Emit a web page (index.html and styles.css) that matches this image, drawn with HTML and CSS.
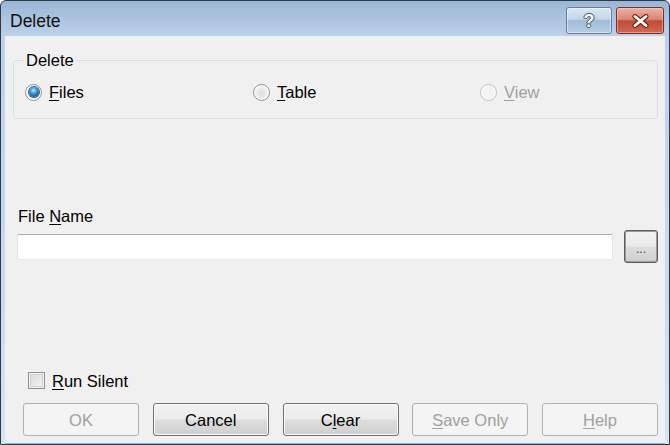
FILE: index.html
```html
<!DOCTYPE html>
<html>
<head>
<meta charset="utf-8">
<link rel="stylesheet" href="styles.css">
</head>
<body>
<div class="window">
  <div class="titlebar">
    <span class="title">Delete</span>
    <div class="caption-btns">
      <span class="cap-btn help"><span class="q">?</span></span>
      <span class="cap-btn close">
        <svg width="19" height="14" viewBox="0 0 19 14">
          <path d="M4 2.5 L15 11.5 M15 2.5 L4 11.5" stroke="#6a261b" stroke-width="5" stroke-linecap="round"/>
          <path d="M4 2.5 L15 11.5 M15 2.5 L4 11.5" stroke="#ffffff" stroke-width="2.8" stroke-linecap="round"/>
        </svg>
      </span>
    </div>
  </div>
  <div class="client">
    <fieldset class="group">
      <legend>Delete</legend>
      <div class="radios">
        <div class="opt"><span class="radio checked"><span class="dot"></span></span><span><u>F</u>iles</span></div>
        <div class="opt"><span class="radio"></span><span><u>T</u>able</span></div>
        <div class="opt disabled"><span class="radio"></span><span><u>V</u>iew</span></div>
      </div>
    </fieldset>
    <div class="fn-label">File <u>N</u>ame</div>
    <div class="file-row">
      <div class="input"></div>
      <div class="btn browse"><span class="dots">...</span></div>
    </div>
    <div class="check"><span class="box"></span><span><u>R</u>un Silent</span></div>
    <div class="buttons">
      <div class="btn disabled">OK</div>
      <div class="btn">Cancel</div>
      <div class="btn">C<u>l</u>ear</div>
      <div class="btn disabled"><u>S</u>ave Only</div>
      <div class="btn disabled"><u>H</u>elp</div>
    </div>
  </div>
</div>
</body>
</html>
```
FILE: styles.css
```css
* { box-sizing: border-box; }
html, body { margin: 0; padding: 0; background: #ffffff; }
body {
  font-family: "Liberation Sans", Arial, sans-serif;
  font-size: 16.5px;
  line-height: 18px;
  color: #000;
}
u { text-decoration: underline; text-underline-offset: 2px; }

.window {
  width: 670px;
  height: 445px;
  border: 1px solid #2f3a47;
  border-radius: 6px 6px 0 0;
  background: linear-gradient(#9bb6d5 0px, #bcd2ea 36px, #c9dcef 300px, #d4e4f3 440px);
  display: flex;
  flex-direction: column;
  overflow: hidden;
}
.titlebar {
  height: 35px;
  display: flex;
  justify-content: space-between;
  align-items: flex-start;
  padding: 0 5px 0 9px;
}
.title {
  font-size: 17.5px;
  line-height: 20px;
  margin-top: 10px;
  color: #101010;
}
.caption-btns {
  display: flex;
  gap: 4px;
  margin-top: 6px;
}
.cap-btn {
  height: 27px;
  border-radius: 3px;
  display: flex;
  align-items: center;
  justify-content: center;
}
.help {
  width: 46px;
  border: 1px solid #6a7f98;
  background: linear-gradient(#dae7f4 0%, #c2d5e9 45%, #a3bcd7 50%, #b6cce3 100%);
  box-shadow: inset 0 0 0 1px rgba(255,255,255,0.45);
}
.help .q {
  font-weight: bold;
  font-size: 18px;
  line-height: 20px;
  color: #ffffff;
  text-shadow: 0 0 1px #34465c, 0 0 1px #34465c, 1px 0 0 #4a5e76, -1px 0 0 #4a5e76, 0 1px 0 #4a5e76, 0 -1px 0 #4a5e76;
}
.close {
  width: 48px;
  border: 1px solid #7c2e22;
  background: linear-gradient(#eab1a5 0%, #da8674 45%, #c44a33 52%, #cf6b55 100%);
  box-shadow: inset 0 0 0 1px rgba(255,220,210,0.45);
}

.client {
  flex: 1;
  margin: 0 4px 0 4px;
  background: #f0f0f0;
  border-bottom: 1px solid #5ec4ec;
  padding: 0 7px 6px 0;
  display: flex;
  flex-direction: column;
}

.group {
  margin: 15px 0 0 8px;
  padding: 14px 0 17px 11px;
  border: 1px solid #d5dfe5;
  border-radius: 3px;
  min-width: 0;
}
.group legend {
  margin-left: -1px;
  padding: 0 2px;
  line-height: 18px;
}
.radios {
  display: grid;
  grid-template-columns: 228px 227px auto;
  height: 18px;
}
.opt {
  display: flex;
  align-items: center;
  gap: 7px;
}
.opt.disabled { color: #a0a0a0; }
.radio {
  width: 17px;
  height: 17px;
  border-radius: 50%;
  border: 1px solid #8f9090;
  background: radial-gradient(circle at 50% 55%, #dcdcdc 0%, #ececec 45%, #f8f8f8 75%);
  box-shadow: inset 0 0 0 1px #ffffff;
  display: flex;
  align-items: center;
  justify-content: center;
}
.opt.disabled .radio {
  border-color: #c2c2c2;
  background: #f4f4f4;
}
.radio .dot {
  width: 10px;
  height: 10px;
  border-radius: 50%;
  background: radial-gradient(circle at 45% 35%, #bfeeff 0%, #4aa8e0 30%, #155f9c 70%, #0c3f6e 100%);
  box-shadow: 0 0 0 1px #2a5f8e;
}

.fn-label {
  margin: 88px 0 0 13px;
}
.file-row {
  margin: 5px 0 0 12px;
  display: flex;
  align-items: center;
  gap: 11px;
  height: 33px;
}
.input {
  width: 596px;
  height: 26px;
  background: #ffffff;
  border: 1px solid #e2e3ea;
  border-top-color: #abadb3;
  border-bottom-color: #e3e9ef;
  border-radius: 2px;
}

.btn {
  width: 116px;
  height: 33px;
  border: 1px solid #707070;
  border-radius: 3px;
  background: linear-gradient(#f2f2f2 0%, #ebebeb 48%, #dddddd 52%, #cfcfcf 100%);
  box-shadow: inset 0 0 0 1px #fbfbfb;
  display: flex;
  align-items: center;
  justify-content: center;
  color: #000;
}
.btn.disabled {
  border-color: #adb2b5;
  background: #f4f4f4;
  box-shadow: none;
  color: #a0a0a0;
}
.btn.browse {
  width: 34px;
  height: 33px;
  border: 1px solid #5e5e5e;
  box-shadow: inset 0 0 0 1px #9a9a9a;
  align-items: flex-end;
  padding-bottom: 7px;
}
.dots {
  font-size: 12px;
  line-height: 12px;
  color: #3b3b6a;
  letter-spacing: 0;
}

.check {
  margin: 109px 0 0 23px;
  display: flex;
  align-items: center;
  gap: 7px;
  height: 17px;
}
.box {
  width: 17px;
  height: 17px;
  border: 1px solid #8e8f8f;
  background: linear-gradient(135deg, #d8d8d8 0%, #e6e6e6 50%, #f6f6f6 100%);
  box-shadow: inset 0 0 0 1px #f4f4f4, inset 0 0 0 2px #cfcfcf;
}

.buttons {
  margin: 14px 0 0 18px;
  display: flex;
  gap: 13.75px;
}
```
